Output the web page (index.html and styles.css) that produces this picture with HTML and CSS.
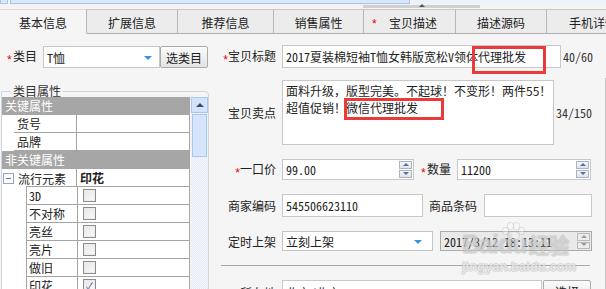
FILE: index.html
```html
<!DOCTYPE html>
<html lang="zh">
<head>
<meta charset="utf-8">
<link rel="stylesheet" href="styles.css">
</head>
<body>
<div class="topstrip">
  <div class="tb-small"></div>
  <div class="tb-panel"></div>
  <div class="tb-rest"></div>
  <div class="splitter"><span class="split-arrow"></span></div>
</div>
<div class="tabs">
  <div class="tab active">基本信息</div>
  <div class="tab">扩展信息</div>
  <div class="tab">推荐信息</div>
  <div class="tab">销售属性</div>
  <div class="tab"><span class="tab-star">*</span>宝贝描述</div>
  <div class="tab">描述源码</div>
  <div class="tab last">手机详情</div>
</div>
<div class="main">
  <div class="left">
    <div class="cat-row">
      <span class="lbl"><i class="req">*</i>类目</span>
      <div class="select cat-select"><span>T恤</span><span class="caret"></span></div>
      <button class="btn cat-btn">选类目</button>
    </div>
    <fieldset class="attrs">
      <legend>类目属性</legend>
      <div class="attr-body">
        <div class="grid">
          <div class="hdr">关键属性</div>
          <div class="prow"><div class="k">货号</div><div class="v"></div></div>
          <div class="prow"><div class="k">品牌</div><div class="v"></div></div>
          <div class="hdr">非关键属性</div>
          <div class="grow">
            <div class="k"><span class="minus"></span>流行元素</div>
            <div class="v bold">印花</div>
          </div>
          <div class="srow"><div class="k">3D</div><div class="v"><span class="cb"></span></div></div>
          <div class="srow"><div class="k">不对称</div><div class="v"><span class="cb"></span></div></div>
          <div class="srow"><div class="k">亮丝</div><div class="v"><span class="cb"></span></div></div>
          <div class="srow"><div class="k">亮片</div><div class="v"><span class="cb"></span></div></div>
          <div class="srow"><div class="k">做旧</div><div class="v"><span class="cb"></span></div></div>
          <div class="srow"><div class="k">印花</div><div class="v"><span class="cb checked">✓</span></div></div>
        </div>
        <div class="vscroll">
          <div class="sb-up"><span class="sb-tri"></span></div>
          <div class="sb-thumb"></div>
        </div>
      </div>
    </fieldset>
  </div>

  <div class="right">
    <div class="frow">
      <span class="flabel"><i class="req">*</i>宝贝标题</span>
      <div class="input title-input">2017夏装棉短袖T恤女韩版宽松V领体代理批发</div>
      <span class="count">40/60</span>
    </div>
    <div class="frow r2">
      <span class="flabel">宝贝卖点</span>
      <div class="textarea">面料升级，版型完美。不起球！不变形！两件55！<br>超值促销！微信代理批发</div>
      <span class="count">34/150</span>
    </div>
    <div class="frow r3">
      <span class="flabel"><i class="req">*</i>一口价</span>
      <div class="input spin price-input">99.00<span class="spinner"><span class="sp-up"></span><span class="sp-dn"></span></span></div>
      <span class="flabel2 qty-label"><i class="req">*</i>数量</span>
      <div class="input spin qty-input">11200<span class="spinner"><span class="sp-up"></span><span class="sp-dn"></span></span></div>
    </div>
    <div class="frow r4">
      <span class="flabel">商家编码</span>
      <div class="input code-input">545506623110</div>
      <span class="flabel2 bar-label">商品条码</span>
      <div class="input bar-input"></div>
    </div>
    <div class="frow r5">
      <span class="flabel">定时上架</span>
      <div class="select time-select"><span>立刻上架</span><span class="caret"></span></div>
      <div class="input spin date-input">2017/3/12 18:13:11<span class="spinner dis"><span class="sp-up"></span><span class="sp-dn"></span></span></div>
    </div>
    <div class="divider"></div>
    <div class="frow r7">
      <span class="flabel">所在地</span>
      <div class="input loc-input">北京/北京</div>
      <button class="btn loc-btn">选择</button>
    </div>
  </div>
  <div class="edge"></div>
</div>

<div class="mark mark1"></div>
<div class="mark mark2"></div>

<div class="watermark">
  <div class="wm-paw"><span></span><span></span><span></span><span></span><span class="pad"></span></div>
  <div class="wm-big">Baidu<span class="wm-cn">经验</span></div>
  <div class="wm-small">jingyan.baidu.com</div>
</div>
</body>
</html>
```

FILE: styles.css
```css
html, body {
  margin: 0;
  padding: 0;
}
body {
  width: 606px;
  height: 289px;
  overflow: hidden;
  background: #f5f5f5;
  font-family: "Noto Sans CJK SC", "Noto Sans", sans-serif;
  font-size: 12px;
  font-feature-settings: "hwid";
  color: #222;
  position: relative;
}
i.req {
  font-style: normal;
  color: #e60000;
  font-family: "Liberation Sans", sans-serif;
  font-size: 12px;
  display: inline-block;
  width: 6px;
  vertical-align: -3px;
  line-height: 1;
}

/* top strip */
.topstrip {
  height: 9px;
  display: flex;
  position: relative;
  background: #f3f3f3;
}
.tb-small {
  width: 8px;
  height: 4px;
  background: #d9e7fb;
  border: 1px solid #a8c4ea;
  border-top: 0;
  box-sizing: border-box;
}
.tb-panel {
  width: 400px;
  margin-left: 2px;
  height: 4px;
  background: #d9e7fb;
  border: 1px solid #a8c4ea;
  border-top: 0;
  box-sizing: border-box;
}
.tb-rest {
  flex: 1;
  height: 4px;
  background: #eef3fa;
}
.splitter {
  position: absolute;
  left: 363px;
  top: 5px;
  width: 117px;
  height: 3px;
  background: #d0d0d0;
}
.split-arrow {
  position: absolute;
  left: 56px;
  top: -1px;
  width: 0;
  height: 0;
  border-left: 3px solid transparent;
  border-right: 3px solid transparent;
  border-bottom: 3px solid #555;
}

/* tabs */
.tabs {
  display: flex;
  height: 25px;
  overflow: hidden;
}
.tab {
  box-sizing: border-box;
  flex: none;
  height: 25px;
  line-height: 25px;
  text-align: center;
  font-size: 12px;
  color: #222;
  background: #ececec;
  border-top: 1px solid #c9c9c9;
  border-right: 1px solid #b7b7b7;
  border-bottom: 1px solid #b0b0b0;
  white-space: nowrap;
  overflow: hidden;
}
.tab.active {
  background: #f5f5f5;
  border-bottom-color: transparent;
  border-top-color: #dcdcdc;
}
.tab:nth-child(1) { width: 87px; }
.tab:nth-child(2) { width: 91px; }
.tab:nth-child(3) { width: 96px; }
.tab:nth-child(4) { width: 90px; }
.tab:nth-child(5) { width: 92px; text-align: left; padding-left: 8px; }
.tab:nth-child(6) { width: 91px; }
.tab.last { width: 91px; padding-left: 2px; }
.tab-star {
  color: #e60000;
  font-family: "Liberation Sans", sans-serif;
  display: inline-block;
  width: 17px;
}

/* main */
.main {
  display: flex;
  align-items: flex-start;
  padding-top: 11px;
}
.left {
  width: 209px;
  flex: none;
}
.cat-row {
  display: flex;
  align-items: center;
  height: 23px;
  padding-left: 7px;
}
.lbl {
  width: 36px;
  white-space: nowrap;
}
.select {
  box-sizing: border-box;
  background: #fff;
  border: 1px solid #c6c6c6;
  display: flex;
  align-items: center;
  padding-left: 3px;
  position: relative;
}
.caret {
  position: absolute;
  right: 7px;
  top: 50%;
  margin-top: -1px;
  width: 0;
  height: 0;
  border-left: 4px solid transparent;
  border-right: 4px solid transparent;
  border-top: 4px solid #3d8fe0;
}
.cat-select {
  width: 117px;
  height: 22px;
  margin-top: 1px;
}
.btn {
  box-sizing: border-box;
  font-family: inherit;
  font-size: 12px;
  color: #222;
  background: linear-gradient(#fbfbfb, #e4e4e4);
  border: 1px solid #ababab;
  border-radius: 2px;
  padding: 0;
}
.cat-btn {
  width: 48px;
  height: 22px;
  margin-top: 1px;
}

/* fieldset */
.attrs {
  margin: 17px 0 0 1px;
  padding: 0;
  border: 1px solid #cfd6e0;
  border-radius: 0 4px 0 0;
  width: 206px;
  box-sizing: border-box;
  height: 260px;
}
.attrs legend {
  margin-left: 9px;
  padding: 0 2px;
  line-height: 12px;
  font-size: 12px;
  color: #333;
}
.attr-body {
  display: flex;
  height: 100%;
}
.grid {
  width: 188px;
  box-sizing: border-box;
  background: #fff;
  border-right: 1px solid #a4a4a4;
  flex: none;
}
.hdr {
  height: 18px;
  line-height: 18px;
  background: #a6a6a6;
  color: #fff;
  padding-left: 3px;
}
.prow, .grow, .srow {
  display: grid;
  height: 18px;
  box-sizing: border-box;
  line-height: 17px;
}
.prow, .srow {
  border-bottom: 1px solid #a4a4a4;
}
.prow {
  margin-left: 12px;
  grid-template-columns: 63px 1fr;
}
.prow .k { padding-left: 3px; border-right: 1px solid #a4a4a4; }
.grow {
  grid-template-columns: 75px 1fr;
  position: relative;
}
.grow::after {
  content: "";
  position: absolute;
  left: 24px;
  right: 0;
  bottom: 0;
  height: 1px;
  background: #a4a4a4;
}
.grow .k {
  padding-left: 1px;
  border-right: 1px solid #a4a4a4;
  display: flex;
  align-items: center;
  gap: 4px;
}
.grow .v { padding-left: 3px; }
.bold { font-weight: bold; }
.minus {
  width: 9px;
  height: 9px;
  border: 1px solid #8ea6c8;
  background: #fff;
  position: relative;
  flex: none;
}
.minus::after {
  content: "";
  position: absolute;
  left: 2px;
  right: 2px;
  top: 4px;
  height: 1px;
  background: #5a7ab0;
}
.srow {
  margin-left: 24px;
  grid-template-columns: 51px 1fr;
  border-left: 1px solid #a4a4a4;
}
.srow .k { padding-left: 2px; border-right: 1px solid #a4a4a4; }
.srow .v { display: flex; align-items: center; padding-left: 5px; }
.cb {
  width: 11px;
  height: 11px;
  border: 1px solid #8c8c8c;
  background: linear-gradient(135deg, #e6e6e6, #fafafa);
  box-shadow: inset 0 0 0 1px #ececec;
  font-size: 10px;
  line-height: 11px;
  text-align: center;
  color: #2b4a8a;
  overflow: hidden;
}
.vscroll {
  width: 17px;
  margin-left: 1px;
  flex: none;
  display: flex;
  flex-direction: column;
  gap: 1px;
  background-color: #f2f6fc;
  background-image: repeating-conic-gradient(#e2eaf7 0 25%, #f6f9fd 0 50%);
  background-size: 2px 2px;
}
.sb-up {
  height: 16px;
  box-sizing: border-box;
  background: #d3e3fa;
  border: 1px solid #a9c7ef;
  display: flex;
  align-items: center;
  justify-content: center;
}
.sb-tri {
  width: 0;
  height: 0;
  border-left: 4px solid transparent;
  border-right: 4px solid transparent;
  border-bottom: 4px solid #3b4d66;
}
.sb-thumb {
  height: 43px;
  box-sizing: border-box;
  background: #d6e5fb;
  border: 1px solid #a9c7ef;
  margin: 0 1px;
}

/* right form */
.right {
  width: 393px;
  flex: none;
  padding-left: 6px;
  box-sizing: border-box;
}
.frow {
  display: flex;
  align-items: center;
}
.flabel {
  width: 61px;
  text-align: right;
  margin-right: 6px;
  white-space: nowrap;
  flex: none;
}
.flabel2 {
  white-space: nowrap;
  flex: none;
}
.input {
  box-sizing: border-box;
  background: #fff;
  border: 1px solid #c8c8c8;
  padding-left: 3px;
  white-space: nowrap;
  overflow: hidden;
  display: flex;
  align-items: center;
  position: relative;
  flex: none;
}
.title-input { width: 279px; height: 23px; }
.count {
  margin-left: 2px;
  color: #333;
  white-space: nowrap;
}
.r2 { margin-top: 12px; }
.textarea {
  box-sizing: border-box;
  width: 272px;
  height: 65px;
  background: #fff;
  border: 1px solid #c8c8c8;
  padding: 1px 3px;
  line-height: 17px;
  flex: none;
  white-space: nowrap;
  overflow: hidden;
  font-feature-settings: normal;
}
.r3 { margin-top: 14px; }
.price-input { width: 132px; height: 21px; }
.qty-label { margin-left: 7px; margin-right: 6px; }
.qty-input { width: 134px; height: 21px; }
.spinner {
  position: absolute;
  right: 1px;
  top: 1px;
  bottom: 1px;
  width: 13px;
  display: flex;
  flex-direction: column;
  gap: 1px;
}
.sp-up, .sp-dn {
  flex: 1;
  box-sizing: border-box;
  border: 1px solid #a9b4c4;
  background: linear-gradient(#f7f7f7, #e2e2e2);
  position: relative;
}
.sp-up::after, .sp-dn::after {
  content: "";
  position: absolute;
  left: 50%;
  top: 50%;
  margin-left: -3px;
  margin-top: -2px;
  border-left: 3px solid transparent;
  border-right: 3px solid transparent;
}
.sp-up::after { border-bottom: 3px solid #4b6fb8; }
.sp-dn::after { border-top: 3px solid #4b6fb8; }
.spinner.dis .sp-up, .spinner.dis .sp-dn { border-color: #b9b9b9; background: #ededed; }
.spinner.dis .sp-up::after { border-bottom-color: #9a9a9a; }
.spinner.dis .sp-dn::after { border-top-color: #9a9a9a; }
.r4 { margin-top: 14px; }
.code-input { width: 141px; height: 23px; }
.bar-label { margin-left: 6px; margin-right: 7px; }
.bar-input { width: 108px; height: 23px; }
.r5 { margin-top: 14px; }
.time-select { width: 151px; height: 20px; flex: none; }
.time-select .caret { right: 10px; }
.date-input {
  width: 152px;
  height: 20px;
  margin-left: 7px;
  background: #e9e9e9;
  border-color: #ababab;
}
.divider {
  margin-top: 14px;
  height: 1px;
  width: 369px;
  margin-left: 6px;
  background: #a8a8a8;
}
.r7 { margin-top: 14px; align-items: flex-start; }
.r7 .flabel { padding-top: 4px; }
.loc-input { width: 260px; height: 23px; align-items: flex-start; padding-top: 3px; }
.loc-btn { width: 48px; height: 23px; margin-left: 1px; }

.edge {
  flex: 1;
  align-self: stretch;
  margin-top: 33px;
  margin-left: 3px;
  height: 300px;
  border-left: 1px solid #c4c4c4;
  background: #f7f7f7;
}

/* annotation boxes */
.mark {
  position: absolute;
  border: 3px solid #ea3b3b;
  box-sizing: border-box;
}
.mark1 { left: 472px; top: 46px; width: 74px; height: 28px; }
.mark2 { left: 344px; top: 98px; width: 100px; height: 22px; }

/* watermark */
.watermark {
  position: absolute;
  left: 462px;
  top: 222px;
  width: 112px;
  color: rgba(255,255,255,0.28);
  pointer-events: none;
  font-feature-settings: normal;
}
.wm-big {
  font-family: "Liberation Sans", sans-serif;
  font-weight: bold;
  font-size: 25px;
  line-height: 24px;
  margin-top: 10px;
  letter-spacing: -1px;
  text-shadow: 1px 0 0 rgba(170,170,170,0.28), -1px 0 0 rgba(170,170,170,0.28), 0 1px 0 rgba(170,170,170,0.28), 0 -1px 0 rgba(170,170,170,0.28);
}
.wm-cn {
  font-family: "Noto Sans CJK SC", sans-serif;
  font-size: 21px;
  margin-left: 2px;
}
.wm-small {
  font-family: "Liberation Sans", sans-serif;
  font-weight: bold;
  font-size: 13px;
  line-height: 16px;
  margin-top: 3px;
  color: rgba(255,255,255,0.6);
  text-shadow: 1px 0 0 rgba(170,170,170,0.35), -1px 0 0 rgba(170,170,170,0.35), 0 1px 0 rgba(170,170,170,0.35), 0 -1px 0 rgba(170,170,170,0.35);
}
.wm-paw {
  position: absolute;
  left: 40px;
  top: 0;
  width: 22px;
  height: 18px;
}
.wm-paw span {
  position: absolute;
  width: 5px;
  height: 6px;
  border-radius: 50%;
  background: rgba(255,255,255,0.3);
  box-shadow: 0 0 0 1px rgba(170,170,170,0.3);
}
.wm-paw span:nth-child(1) { left: 1px; top: 6px; }
.wm-paw span:nth-child(2) { left: 6px; top: 1px; }
.wm-paw span:nth-child(3) { left: 12px; top: 1px; }
.wm-paw span:nth-child(4) { left: 17px; top: 6px; }
.wm-paw span.pad { left: 6px; top: 10px; width: 11px; height: 8px; }
```
